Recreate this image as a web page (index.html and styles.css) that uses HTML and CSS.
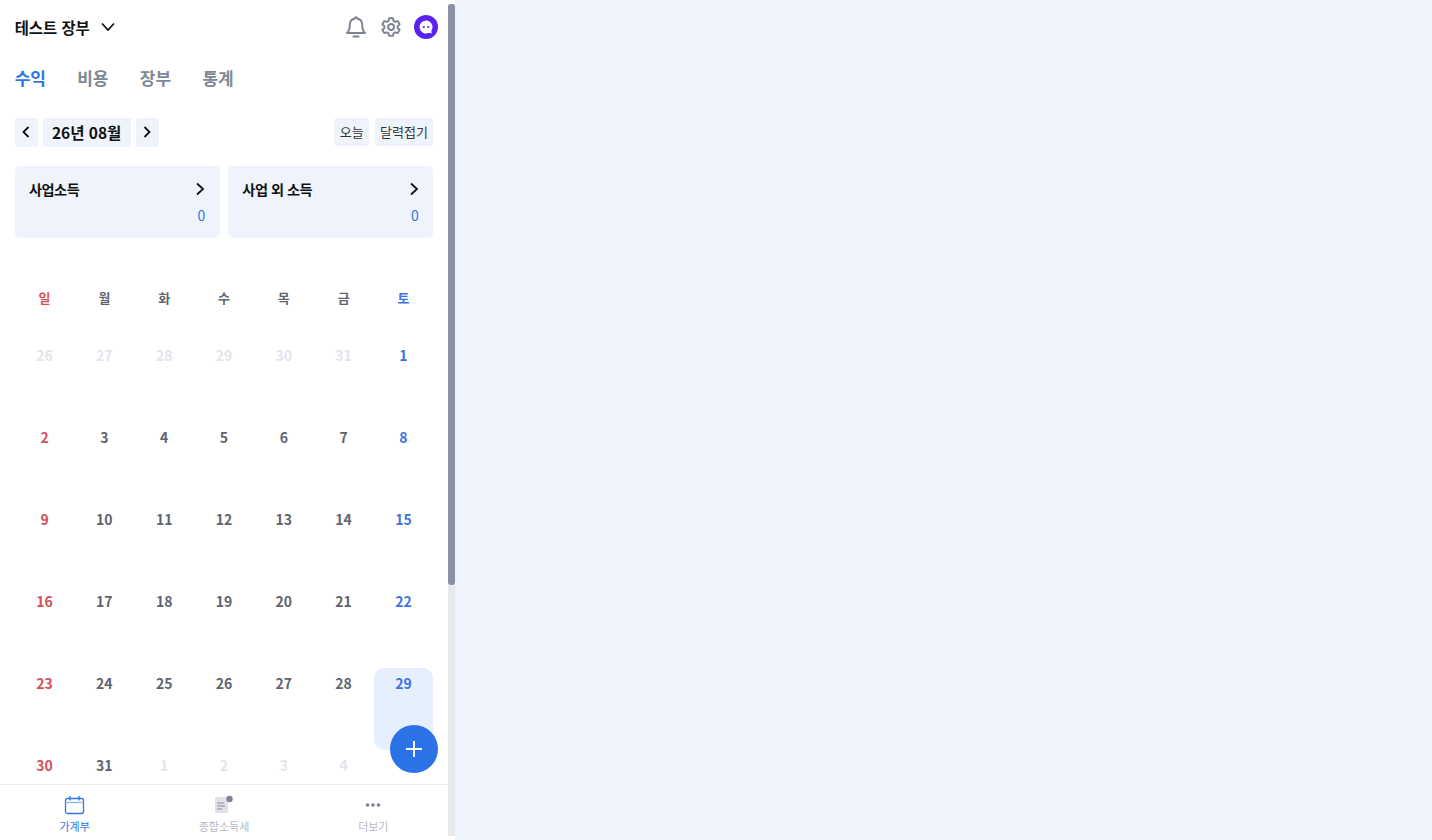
FILE: index.html
```html
<!DOCTYPE html>
<html lang="ko">
<head>
<meta charset="utf-8">
<title>가계부</title>
<link rel="stylesheet" href="styles.css">
</head>
<body>
<div class="app">
  <div class="panel">
    <main class="content">
      <header class="top">
        <div class="book">테스트 장부
          <svg class="book-caret" width="16" height="16" viewBox="0 0 16 16"><path d="M2 4.500l6 6.500 6-6.500" fill="none" stroke="#111" stroke-width="1.700"/></svg>
        </div>
        <div class="top-icons">
          <svg width="22" height="24" viewBox="0 0 22 24"><path d="M11 2.200a1.200 1.200 0 0 1 1.200 1.300c3.300.6 5 3.200 5 6.500 0 3 .5 5.800 2.800 8H2c2.300-2.200 2.800-5 2.800-8 0-3.300 1.700-5.900 5-6.500A1.200 1.200 0 0 1 11 2.200z" fill="none" stroke="#7d8290" stroke-width="1.900" stroke-linejoin="round"/><path d="M8.500 21.500h5" stroke="#7d8290" stroke-width="2" stroke-linecap="round"/></svg>
          <svg class="gear" width="22" height="22" viewBox="0 0 24 24" fill="none" stroke="#7d8290" stroke-width="2.100" stroke-linejoin="round"><path d="M9.900 2.500h4.200l.6 2.900 1.800 1 2.800-.9 2.100 3.600-2.200 2v2l2.200 1.900-2.100 3.700-2.800-.9-1.800 1-.6 2.900H9.900l-.6-2.900-1.800-1-2.800.9-2.100-3.700 2.200-1.900v-2l-2.200-2 2.100-3.600 2.800.9 1.800-1z"/><circle cx="12" cy="12" r="3.300"/></svg>
          <span class="avatar"><svg width="16" height="16" viewBox="0 0 16 16"><path d="M8 1.500a6.500 6.500 0 1 0 3 12.300l2.700.7-.4-2.800A6.500 6.500 0 0 0 8 1.500z" fill="#fff"/><circle cx="5.800" cy="8" r="1.100" fill="#5a22f0"/><circle cx="10.200" cy="8" r="1.100" fill="#5a22f0"/></svg></span>
        </div>
      </header>

      <nav class="tabs">
        <span class="tab tab-on">수익</span>
        <span class="tab">비용</span>
        <span class="tab">장부</span>
        <span class="tab">통계</span>
      </nav>

      <div class="month-bar">
        <div class="month-left">
          <span class="chip chip-arrow"><svg width="10" height="12" viewBox="0 0 10 12"><path d="M7.500 1L2.500 6l5 5" fill="none" stroke="#111" stroke-width="1.800"/></svg></span>
          <span class="chip chip-month">26년 08월</span>
          <span class="chip chip-arrow"><svg width="10" height="12" viewBox="0 0 10 12"><path d="M2.500 1l5 5-5 5" fill="none" stroke="#111" stroke-width="1.800"/></svg></span>
        </div>
        <div class="month-right">
          <span class="chip chip-small">오늘</span>
          <span class="chip chip-small">달력접기</span>
        </div>
      </div>

      <section class="cards">
        <div class="card">
          <div class="card-head"><span>사업소득</span><svg width="10" height="14" viewBox="0 0 10 14"><path d="M2 1.500L8 7l-6 5.500" fill="none" stroke="#111" stroke-width="1.800"/></svg></div>
          <div class="card-val">0</div>
        </div>
        <div class="card">
          <div class="card-head"><span>사업 외 소득</span><svg width="10" height="14" viewBox="0 0 10 14"><path d="M2 1.500L8 7l-6 5.500" fill="none" stroke="#111" stroke-width="1.800"/></svg></div>
          <div class="card-val">0</div>
        </div>
      </section>

      <div class="weekdays">
        <span class="sun">일</span><span>월</span><span>화</span><span>수</span><span>목</span><span>금</span><span class="sat">토</span>
      </div>

      <div class="days">
        <span class="day out">26</span><span class="day out">27</span><span class="day out">28</span><span class="day out">29</span><span class="day out">30</span><span class="day out">31</span><span class="day sat">1</span>
        <span class="day sun">2</span><span class="day">3</span><span class="day">4</span><span class="day">5</span><span class="day">6</span><span class="day">7</span><span class="day sat">8</span>
        <span class="day sun">9</span><span class="day">10</span><span class="day">11</span><span class="day">12</span><span class="day">13</span><span class="day">14</span><span class="day sat">15</span>
        <span class="day sun">16</span><span class="day">17</span><span class="day">18</span><span class="day">19</span><span class="day">20</span><span class="day">21</span><span class="day sat">22</span>
        <span class="day sun">23</span><span class="day">24</span><span class="day">25</span><span class="day">26</span><span class="day">27</span><span class="day">28</span><span class="day sat today">29</span>
        <span class="day sun">30</span><span class="day">31</span><span class="day out">1</span><span class="day out">2</span><span class="day out">3</span><span class="day out">4</span><span class="day out">5</span>
      </div>
    </main>

    <button class="fab" type="button" aria-label="추가"><svg width="18" height="18" viewBox="0 0 18 18"><path d="M9 1v16M1 9h16" stroke="#fff" stroke-width="1.900"/></svg></button>

    <footer class="bottom">
      <div class="bottom-item on">
        <svg width="22" height="20" viewBox="0 0 22 20" fill="none" stroke="#2f75e6" stroke-width="1.300"><rect x="1.500" y="3.500" width="18" height="15" rx="2"/><path d="M1.500 7.500h18" stroke="#8fb6f0"/><path d="M6 1v4.500M15 1v4.500"/></svg>
        <span>가계부</span>
      </div>
      <div class="bottom-item">
        <svg width="22" height="20" viewBox="0 0 22 20"><rect x="2" y="2" width="13" height="16" fill="#dfe1e8"/><path d="M4 8h7M4 11h8M4 14h5" stroke="#8b8f9d" stroke-width="1.100"/><circle cx="16.500" cy="4" r="3.200" fill="#7d8290"/></svg>
        <span>종합소득세</span>
      </div>
      <div class="bottom-item">
        <svg width="22" height="20" viewBox="0 0 22 20" fill="#7d8290"><circle cx="5.500" cy="10" r="1.800"/><circle cx="11" cy="10" r="1.800"/><circle cx="16.500" cy="10" r="1.800"/></svg>
        <span>더보기</span>
      </div>
    </footer>
  </div>

  <div class="scrollbar"><div class="thumb"></div></div>
  <div class="side"></div>
</div>
</body>
</html>
```
FILE: styles.css
```css
* { box-sizing: border-box; }
html, body { margin: 0; height: 100%; overflow: hidden; }
body { font-family: "Noto Sans CJK KR", "Noto Sans", sans-serif; background: #fff; color: #111; }

.app { display: flex; width: 1432px; height: 840px; }
.panel { position: relative; width: 448px; height: 840px; display: flex; flex-direction: column; background: #fff; }
.content { flex: 1; min-height: 0; overflow: hidden; padding: 0 14.67px; }
.scrollbar { width: 7px; height: 840px; padding: 4px 0; flex: none; background: linear-gradient(#fff 4px, #e7e8ec 4px, #e7e8ec 836px, #fff 836px); }
.thumb { height: 581px; border-radius: 3px; background: #8b90a5; }
.side { flex: 1; background: #eff3fb; }

.top { height: 54px; display: flex; align-items: center; justify-content: space-between; margin-right: -4.67px; }
.book { display: flex; align-items: center; font-size: 15.4px; font-weight: 700; line-height: 22px; }
.book-caret { margin-left: 10.5px; }
.top-icons { display: flex; align-items: center; }
.gear { margin: 0 12.5px 0 12.9px; }
.avatar { width: 24px; height: 24px; border-radius: 50%; background: #5a22f0; display: flex; align-items: center; justify-content: center; }

.tabs { display: flex; gap: 31.3px; height: 48px; align-items: center; }
.tab { font-size: 17px; font-weight: 700; color: #7f8896; line-height: 24px; }
.tab-on { color: #2f75e6; }

.month-bar { display: flex; justify-content: space-between; align-items: flex-start; margin-top: 15.5px; height: 29px; }
.month-left { display: flex; gap: 5px; }
.month-right { display: flex; gap: 5.7px; }
.chip { display: flex; align-items: center; justify-content: center; background: #eff3fb; border-radius: 2px; }
.chip-arrow { width: 23px; height: 29px; }
.chip-month { width: 88px; height: 29px; font-size: 15.5px; font-weight: 700; }
.chip-small { height: 28px; padding: 0 5.4px; font-size: 13px; color: #333; border-radius: 3px; }

.cards { display: grid; grid-template-columns: 1fr 1fr; gap: 8px; margin-top: 19.5px; }
.card { height: 72px; background: #eff3fb; border-radius: 5px; padding: 12px 14.7px 0 14.33px; }
.card-head { display: flex; justify-content: space-between; align-items: center; height: 22px; font-size: 14.2px; font-weight: 700; letter-spacing: -0.5px; }
.card-val { margin-top: 4px; text-align: right; font-size: 14px; line-height: 22px; color: #2f75e6; }

.weekdays { display: grid; grid-template-columns: repeat(7, 1fr); margin-top: 50px; height: 20px; text-align: center; font-size: 13px; font-weight: 700; line-height: 20px; color: #5f6470; }
.days { display: grid; grid-template-columns: repeat(7, 1fr); grid-auto-rows: 82px; margin-top: 32px; }
.day { text-align: center; font-size: 14px; font-weight: 700; line-height: 22px; padding-top: 4px; color: #5f6470; border-radius: 10px; }
.sun { color: #d4505a; }
.sat { color: #3d74e0; }
.out { color: #e3e5ec; }
.today { background: #e6effd; }

.fab { position: absolute; left: 390px; top: 725px; width: 48px; height: 48px; border: 0; padding: 0; border-radius: 50%; background: #2a72e5; display: flex; align-items: center; justify-content: center; }

.bottom { height: 56px; flex: none; display: grid; grid-template-columns: repeat(3, 1fr); border-top: 1px solid #e9ebf1; background: #fff; }
.bottom-item { display: flex; flex-direction: column; align-items: center; padding-top: 10px; font-size: 11px; line-height: 14px; color: #b6b9c2; gap: 4px; }
.bottom-item.on { color: #2f75e6; }
```
